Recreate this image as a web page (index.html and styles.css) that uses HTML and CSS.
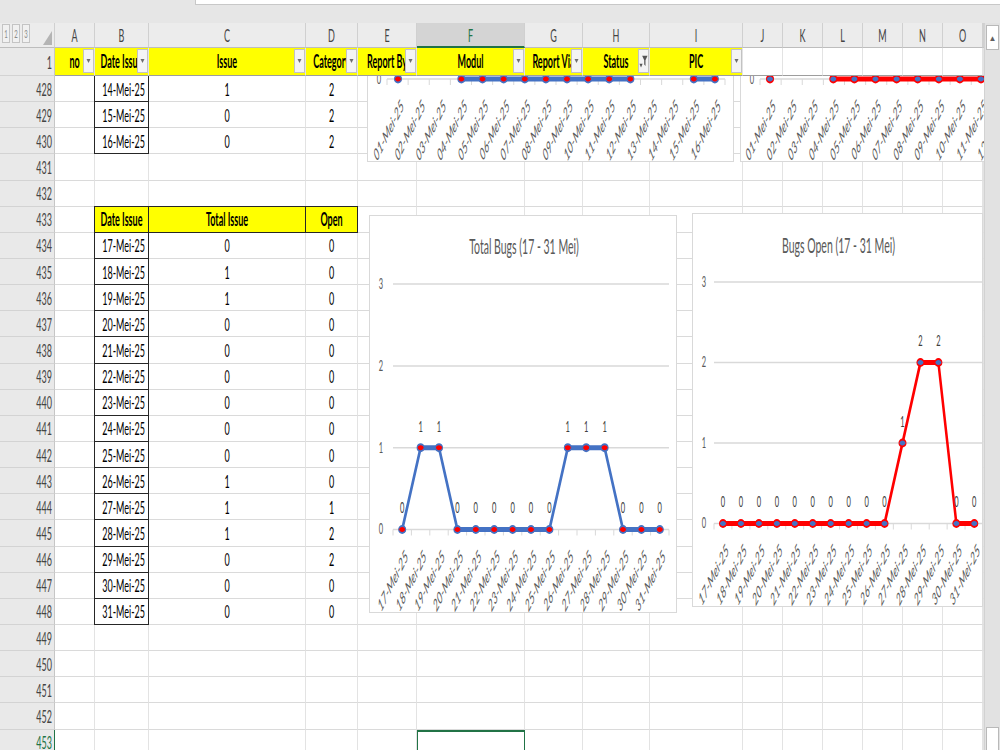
FILE: index.html
```html
<!DOCTYPE html>
<html lang="id">

<head>
    <meta charset="UTF-8">
    <meta name="viewport" content="width=device-width, initial-scale=1.0">
    <title>Rekap Bugs Mei</title>
    <link rel="stylesheet" href="styles.css">
</head>

<body>
    <div class="topbar">
        <div class="formula"></div>
    </div>

    <div class="workspace">
        <div class="sheet-wrap">
            <!-- laid out at double width, then squeezed like the captured window -->
            <div class="sheet">
                <div class="row colhdr">
                    <div class="corner">
                        <span class="lvl">1</span><span class="lvl">2</span><span class="lvl">3</span>
                        <span class="selall"></span>
                    </div>
                    <div>A</div>
                    <div>B</div>
                    <div>C</div>
                    <div>D</div>
                    <div>E</div>
                    <div class="cur">F</div>
                    <div>G</div>
                    <div>H</div>
                    <div>I</div>
                    <div>J</div>
                    <div>K</div>
                    <div>L</div>
                    <div>M</div>
                    <div>N</div>
                    <div>O</div>
                    <div></div>
                </div>

                <div class="row frozen">
                    <div class="rh">1</div>
                    <div class="fh"><span>no</span><i class="dd"></i></div>
                    <div class="fh"><span>Date Issue</span><i class="dd"></i></div>
                    <div class="fh"><span>Issue</span><i class="dd"></i></div>
                    <div class="fh"><span>Category</span><i class="dd"></i></div>
                    <div class="fh"><span>Report By</span><i class="dd"></i></div>
                    <div class="fh"><span>Modul</span><i class="dd"></i></div>
                    <div class="fh"><span>Report Via</span><i class="dd"></i></div>
                    <div class="fh"><span>Status</span><i class="dd on">
                        <svg width="20" height="20" viewBox="0 0 20 20">
                            <path d="M1 12h7l-3.5 4z" fill="#555" />
                            <path d="M7 3h12l-4.6 5v6.5l-2.8-1.6V8z" fill="#555" />
                        </svg>
                    </i></div>
                    <div class="fh"><span>PIC</span><i class="dd"></i></div>
                    <div></div>
                    <div></div>
                    <div></div>
                    <div></div>
                    <div></div>
                    <div></div>
                    <div></div>
                </div>

                <div class="pane">
                    <div id="rows"></div>
                    <div class="chart chart-old-total" id="chart-old-total"></div>
                    <div class="chart chart-old-open" id="chart-old-open"></div>
                    <div class="chart chart-total" id="chart-total"></div>
                    <div class="chart chart-open" id="chart-open"></div>
                </div>
            </div>
        </div>

        <div class="vscroll">
            <div class="sb-btn">&#9650;</div>
            <div class="sb-thumb"></div>
        </div>
    </div>

    <script>
        const may = n => String(n).padStart(2, '0') + '-Mei-25';

        const total = [0, 1, 1, 0, 0, 0, 0, 0, 0, 1, 1, 1, 0, 0, 0];
        const open = [0, 0, 0, 0, 0, 0, 0, 0, 0, 0, 1, 2, 2, 0, 0];
        const early = {
            428: ['14-Mei-25', 1, 2],
            429: ['15-Mei-25', 0, 2],
            430: ['16-Mei-25', 0, 2]
        };

        // sheet rows 428 - 453
        let html = '';
        for (let r = 428; r <= 453; r++) {
            let row = `<div class="rh${r === 453 ? ' cur' : ''}">${r}</div><div></div>`;
            const k = r - 434;

            if (early[r] || (k >= 0 && k < total.length)) {
                const [dt, t, o] = early[r] || [may(17 + k), total[k], open[k]];
                row += `<div class="dt">${dt}</div><div>${t}</div><div>${o}</div>`;
            } else if (r === 433) {
                row += '<div class="th first">Date Issue</div><div class="th">Total Issue</div><div class="th">Open</div>';
            } else {
                row += '<div></div><div></div><div></div>';
            }

            // E .. O, then the sliver of P
            for (let c = 0; c < 11; c++) {
                row += (r === 453 && c === 1) ? '<div class="sel"></div>' : '<div></div>';
            }
            row += '<div></div>';
            html += `<div class="row body-row">${row}</div>`;
        }
        document.getElementById('rows').innerHTML = html;

        // line charts, drawn in the same double-width space as the sheet
        function drawChart(id, c) {
            const n = c.values.length;
            let s = `<svg width="${c.w}" height="${c.h}" viewBox="0 0 ${c.w} ${c.h}">`;
            s += `<text class="ttl" x="${c.w / 2}" y="${c.ty}">${c.title}</text>`;

            for (let v = 0; v <= 3; v++) {
                const y = c.base - c.step * v;
                s += `<line class="grid" x1="${c.gx0}" x2="${c.gx1}" y1="${y}" y2="${y}" />`;
                s += `<text class="ylab" x="22" y="${y + 5}">${v}</text>`;
            }
            for (let i = 0; i <= n; i++) {
                const x = c.gx0 + (c.gx1 - c.gx0) / n * i;
                s += `<line class="tick" x1="${x}" x2="${x}" y1="${c.base}" y2="${c.base + 6}" />`;
            }

            const pts = c.values.map((v, i) => [c.px0 + c.pstep * i, c.base - c.step * v]);
            s += `<polyline class="line" stroke="${c.line}" points="${pts.map(p => p.join(',')).join(' ')}" />`;

            pts.forEach(([x, y], i) => {
                s += `<ellipse cx="${x}" cy="${y}" rx="7" ry="3.5" fill="${c.marker}" stroke="${c.line}" stroke-width="2" />`;
                s += `<text class="dlab" x="${x}" y="${y - 16}">${c.values[i]}</text>`;
                const ax = x + 13, ay = c.base + 28;
                s += `<text class="xlab" x="${ax}" y="${ay}" transform="rotate(-45 ${ax} ${ay})">${may(c.first + i)}</text>`;
            });

            document.getElementById(id).innerHTML = s + '</svg>';
        }

        const blue = '#4472c4', red = '#ff0000';

        drawChart('chart-old-total', {
            w: 734, h: 398, ty: 37, title: 'Total Bugs (01 - 16 Mei)',
            base: 314, step: 82, gx0: 38, gx1: 714, px0: 60, pstep: 42.25,
            first: 1, values: [0, 1, 1, 0, 0, 0, 0, 0, 0, 0, 0, 0, 1, 1, 0, 0],
            line: blue, marker: red
        });
        drawChart('chart-old-open', {
            w: 720, h: 394, ty: 39, title: 'Bugs Open (01 - 16 Mei)',
            base: 310, step: 80.5, gx0: 38, gx1: 714, px0: 58, pstep: 42.2,
            first: 1, values: [0, 1, 1, 0, 0, 0, 0, 0, 0, 0, 0, 0, 0, 2, 2, 2],
            line: red, marker: blue
        });
        drawChart('chart-total', {
            w: 616, h: 398, ty: 38, title: 'Total Bugs (17 - 31 Mei)',
            base: 313.5, step: 81.8, gx0: 46, gx1: 598, px0: 64.4, pstep: 36.8,
            first: 17, values: total, line: blue, marker: red
        });
        drawChart('chart-open', {
            w: 582, h: 394, ty: 39, title: 'Bugs Open (17 - 31 Mei)',
            base: 309.5, step: 80.5, gx0: 42, gx1: 580, px0: 60, pstep: 35.9,
            first: 17, values: open, line: red, marker: blue
        });
    </script>
</body>

</html>
```

FILE: styles.css
```css
* {
    box-sizing: border-box;
}

html,
body {
    margin: 0;
    width: 1000px;
    height: 750px;
    overflow: hidden;
}

body {
    background-color: #e6e6e6;
    font-family: Lato, "Open Sans", sans-serif;
    color: #000;
}

.topbar {
    height: 23px;
    display: flex;
}

.formula {
    margin-left: 195px;
    flex: 1;
    height: 5px;
    background-color: #fff;
    border-left: 1px solid #c8c8c8;
    border-bottom: 1px solid #c8c8c8;
}

.workspace {
    display: flex;
    height: 727px;
}

.sheet-wrap {
    width: 984px;
    overflow: hidden;
}

.sheet {
    width: 1968px;
    height: 727px;
    background-color: #fff;
    transform: scaleX(0.5);
    transform-origin: 0 0;
}

.row {
    display: grid;
    grid-template-columns: 110px 80px 108px 314px 104px 118px 216px 116px 134px 186px repeat(6, 80px) 1fr;
}

.row > div {
    display: flex;
    align-items: center;
    justify-content: center;
    overflow: hidden;
    white-space: nowrap;
    font-size: 18px;
    border-right: 2px solid #e3e3e3;
    border-bottom: 1px solid #dadada;
}

/* column letters */
.colhdr {
    height: 25px;
}

.colhdr > div {
    background-color: #ececec;
    color: #444;
    border-right-color: #d0d0d0;
    border-bottom-color: #bdbdbd;
}

.colhdr > .cur {
    background-color: #d4d4d4;
    color: #217346;
    border-bottom: 2px solid #217346;
}

.colhdr > .corner {
    justify-content: flex-start;
    align-items: stretch;
    padding: 0 4px 2px 4px;
    gap: 4px;
}

.lvl {
    width: 16px;
    margin-top: 1px;
    margin-bottom: 2px;
    background-color: #f1f1f1;
    border: 1px solid #c4c4c4;
    border-width: 1px 2px;
    color: #8a8a8a;
    font-size: 12px;
    display: flex;
    align-items: center;
    justify-content: center;
}

.selall {
    margin-left: auto;
    align-self: flex-end;
    width: 0;
    height: 0;
    border-left: 18px solid transparent;
    border-bottom: 14px solid #b4b4b4;
}

/* row numbers */
.row > .rh {
    background-color: #e9e9e9;
    color: #444;
    justify-content: flex-end;
    padding-right: 4px;
    border-right-color: #c6c6c6;
    border-bottom-color: #d3d3d3;
}

.row > .rh.cur {
    color: #217346;
    border-right-color: #217346;
}

/* frozen header row with filters */
.frozen {
    height: 28px;
}

.frozen > div {
    border-bottom-color: #9d9d9d;
}

.row > .fh {
    background-color: #ffff00;
    font-weight: 700;
    align-items: stretch;
    padding: 1px 0 2px;
}

/* label is centred on the whole cell, the filter button sits over its end */
.fh span {
    flex: 1;
    margin-right: -22px;
    overflow: hidden;
    text-align: center;
    line-height: 24px;
}

.dd {
    width: 22px;
    background-color: #f4f4f4;
    border: 1px solid #c2c2c2;
    border-width: 1px 2px;
    display: flex;
    justify-content: center;
    padding-top: 9px;
}

.dd::after {
    content: "";
    width: 0;
    height: 0;
    border-left: 4px solid transparent;
    border-right: 4px solid transparent;
    border-top: 4px solid #707070;
}

.dd.on {
    padding-top: 2px;
}

.dd.on::after {
    display: none;
}

/* scrolled part */
.pane {
    position: relative;
    height: 674px;
    overflow: hidden;
}

.body-row {
    height: 26.15px;
}

.row > .dt {
    justify-content: flex-end;
    padding-right: 6px;
    margin-left: -2px;
    border-left: 2px solid #262626;
    border-right-color: #262626;
    border-bottom-color: #262626;
}

.row > .th {
    background-color: #ffff00;
    font-weight: 700;
    margin-top: -1px;
    border-top: 1px solid #262626;
    border-right-color: #262626;
    border-bottom-color: #262626;
}

.row > .th.first {
    margin-left: -2px;
    border-left: 2px solid #262626;
}

.row > .sel {
    border: 2px solid #217346;
}

/* charts */
.chart {
    position: absolute;
    background-color: #fff;
    border: 1px solid #d9d9d9;
    border-left-width: 2px;
    border-right-width: 2px;
    overflow: hidden;
}

.chart svg {
    display: block;
}

.chart-old-total {
    left: 734px;
    top: -312px;
    width: 734px;
    height: 398px;
}

.chart-old-open {
    left: 1480px;
    top: -308px;
    width: 720px;
    height: 394px;
}

.chart-total {
    left: 738px;
    top: 139px;
    width: 616px;
    height: 398px;
}

.chart-open {
    left: 1384px;
    top: 137px;
    width: 582px;
    height: 394px;
}

.ttl {
    font-size: 21px;
    fill: #595959;
    text-anchor: middle;
}

.ylab {
    font-size: 15px;
    fill: #595959;
    text-anchor: middle;
}

.dlab {
    font-size: 15px;
    fill: #404040;
    text-anchor: middle;
}

.xlab {
    font-size: 17px;
    font-style: italic;
    fill: #595959;
    text-anchor: end;
}

.grid {
    stroke: #d9d9d9;
    stroke-width: 1.5;
}

.tick {
    stroke: #d9d9d9;
    stroke-width: 2;
}

.line {
    fill: none;
    stroke-width: 5;
    stroke-linejoin: round;
}

/* vertical scroll bar */
.vscroll {
    width: 16px;
    background-color: #e2e2e2;
    border-left: 1px solid #d2d2d2;
    display: flex;
    flex-direction: column;
    align-items: center;
    padding-top: 2px;
}

.sb-btn {
    width: 13px;
    height: 25px;
    background-color: #fff;
    border: 1px solid #b9b9b9;
    color: #606060;
    font-size: 8px;
    display: flex;
    align-items: center;
    justify-content: center;
}

.sb-thumb {
    margin-top: auto;
    width: 13px;
    height: 23px;
    background-color: #fff;
    border: 1px solid #b9b9b9;
    border-bottom: none;
}
```
